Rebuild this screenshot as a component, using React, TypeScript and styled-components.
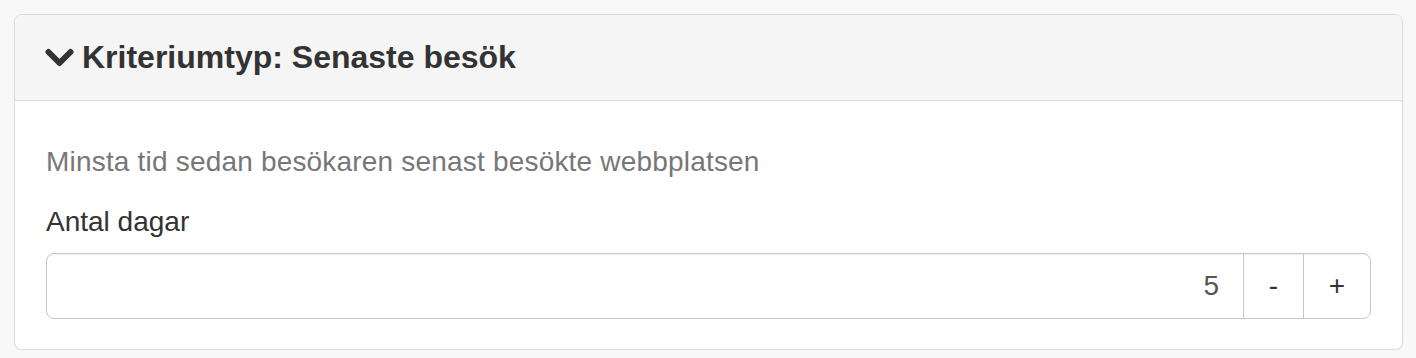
import React from "react";
import styled, { createGlobalStyle } from "styled-components";

const Global = createGlobalStyle`
  html, body { margin: 0; padding: 0; }
  body {
    background: #f8f8f8;
    font-family: "Liberation Sans", Arial, Helvetica, sans-serif;
    color: #333;
  }
`;

const Page = styled.div`
  padding: 14px 13px 0 14px;
`;

const Panel = styled.section`
  background: #fff;
  border: 1px solid #ddd;
  border-radius: 8px;
  box-shadow: 0 1px 2px rgba(0, 0, 0, 0.05);
  overflow: hidden;
`;

const Header = styled.header`
  height: 85px;
  background: #f5f5f5;
  border-bottom: 1px solid #ddd;
  display: flex;
  align-items: center;
  padding: 0 30px;
  gap: 8px;
`;

const Title = styled.h3`
  margin: 0;
  font-size: 32px;
  font-weight: 700;
  color: #333;
`;

const Body = styled.div`
  padding: 41px 31px 30px 31px;
  display: flex;
  flex-direction: column;
`;

const Help = styled.p`
  margin: 0 0 20px 0;
  font-size: 28px;
  line-height: 40px;
  letter-spacing: 0.19px;
  color: #777;
`;

const Label = styled.label`
  font-size: 28px;
  line-height: 40px;
  color: #333;
  margin-bottom: 11px;
`;

const Group = styled.div`
  display: flex;
  height: 66px;
  border: 1px solid #c8c8c8;
  border-radius: 8px;
  overflow: hidden;
  box-sizing: border-box;
  box-shadow: inset 0 1px 1px rgba(0, 0, 0, 0.06);
`;

const NumberField = styled.input`
  flex: 1;
  min-width: 0;
  border: none;
  outline: none;
  text-align: right;
  font-family: inherit;
  font-size: 28px;
  color: #555;
  padding: 0 24px;
  background: transparent;
`;

const StepButton = styled.button<{ $w: number }>`
  width: ${(p) => p.$w}px;
  border: none;
  border-left: 1px solid #c8c8c8;
  background: transparent;
  font-family: inherit;
  font-size: 28px;
  color: #333;
  padding: 0;
  cursor: pointer;
`;

const Chevron = () => (
  <svg width="29" height="20" viewBox="0 0 29 20" aria-hidden>
    <path d="M3.5 4 L14.5 15 L25.5 4" fill="none" stroke="#333" strokeWidth="6" strokeLinecap="round" strokeLinejoin="round" />
  </svg>
);

export default function App() {
  return (
    <>
      <Global />
      <Page>
        <Panel>
          <Header>
            <Chevron />
            <Title>Kriteriumtyp: Senaste besök</Title>
          </Header>
          <Body>
            <Help>Minsta tid sedan besökaren senast besökte webbplatsen</Help>
            <Label htmlFor="days">Antal dagar</Label>
            <Group>
              <NumberField id="days" defaultValue="5" />
              <StepButton $w={60}>-</StepButton>
              <StepButton $w={67}>+</StepButton>
            </Group>
          </Body>
        </Panel>
      </Page>
    </>
  );
}
